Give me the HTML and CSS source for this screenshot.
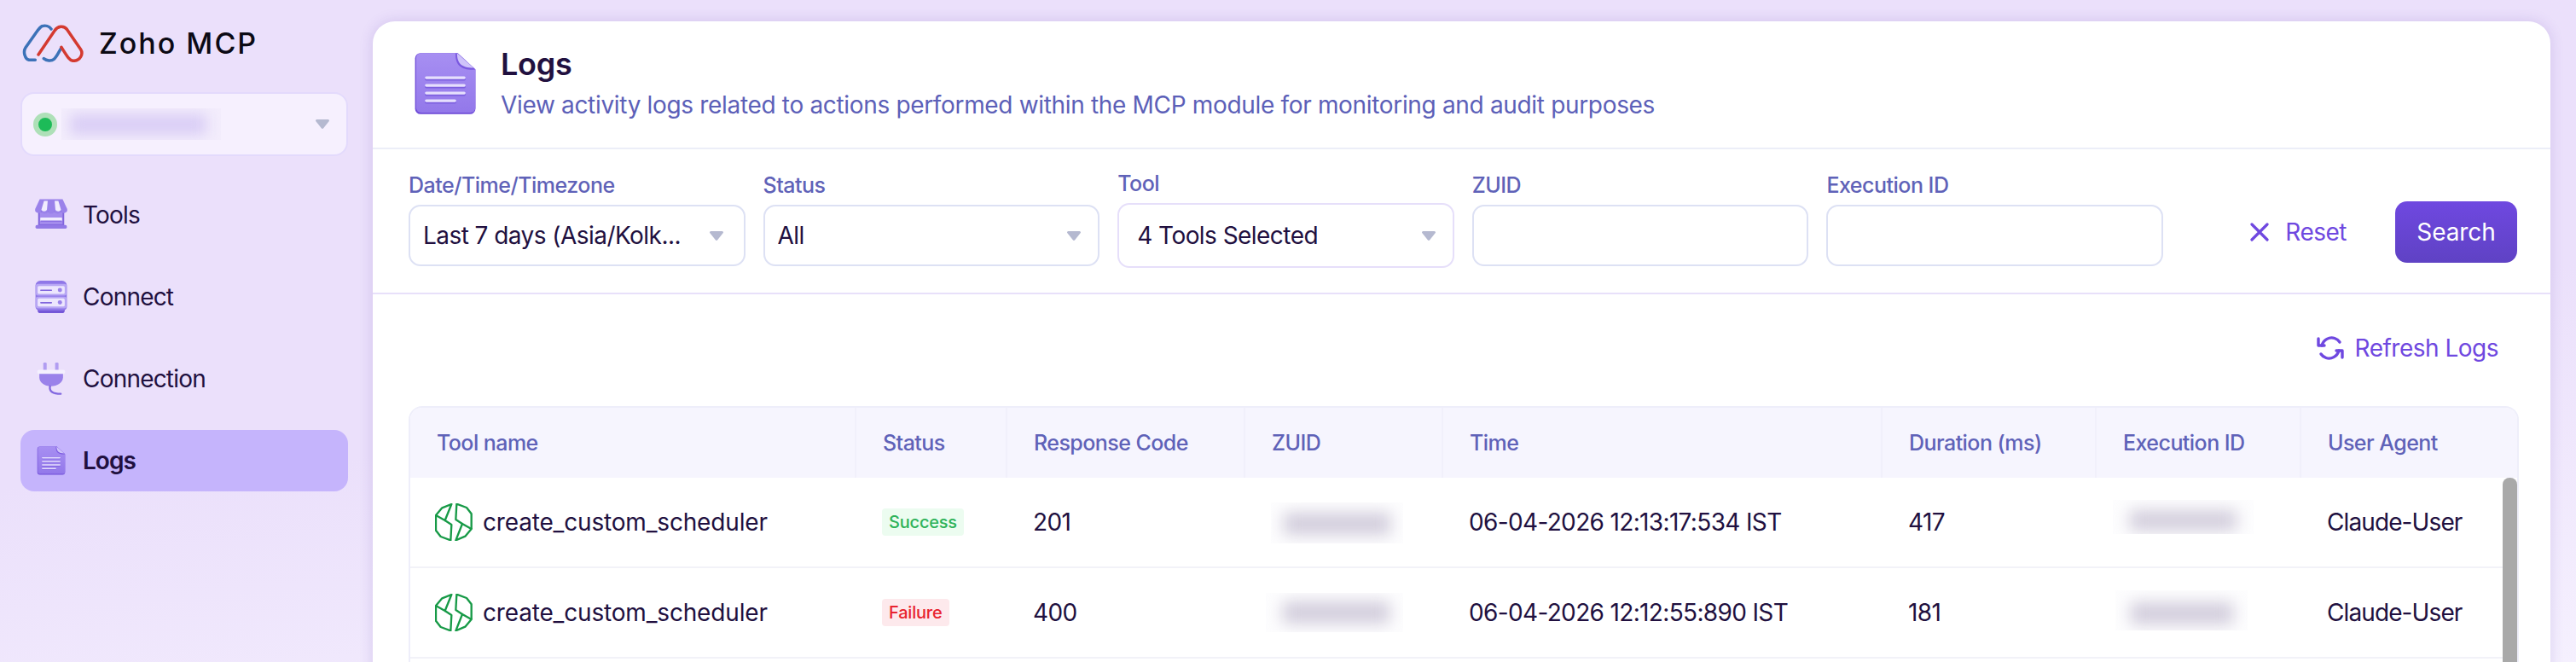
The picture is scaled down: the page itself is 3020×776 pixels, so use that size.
FILE: index.html
```html
<!DOCTYPE html>
<html lang="en">
<head>
<meta charset="utf-8">
<title>Zoho MCP - Logs</title>
<link rel="stylesheet" href="styles.css">
</head>
<body>
<svg class="defs" width="0" height="0" aria-hidden="true">
  <defs>
    <linearGradient id="gDoc" x1="0" y1="0" x2="0" y2="1"><stop offset="0" stop-color="#a78ff2"/><stop offset="1" stop-color="#9378ea"/></linearGradient>
    <symbol id="docIcon" viewBox="40 60 230 233">
      <path fill="#6f4cd8" d="M65 65H200L265 125V268a20 20 0 0 1-20 20H65a20 20 0 0 1-20-20V85a20 20 0 0 1 20-20z"/>
      <path fill="url(#gDoc)" d="M67 65H200L265 125V264a18 18 0 0 1-18 18H67a18 18 0 0 1-18-18V83a18 18 0 0 1 18-18z"/>
      <path fill="#7a58e0" d="M192 66c0 40 16 60 64 60l9-1-65-60z"/>
      <path fill="#cfc3fa" d="M198 65c0 36 14 53 60 54z"/>
      <g stroke-linecap="round" fill="none" stroke-width="11" stroke="#7d5fe0"><path d="M86 160H224M86 188H224M86 216H224M86 244H190"/></g>
      <g stroke-linecap="round" fill="none" stroke-width="10" stroke="#e6dffd"><path d="M86 155H224M86 183H224M86 211H224M86 239H190"/></g>
    </symbol>
    <symbol id="toolIcon" viewBox="0 0 122 122">
      <path fill="#8064dc" d="M12 45H110V106H12z"/>
      <path fill="#a48ced" d="M18 50H104V96H18z"/>
      <rect x="20" y="71" width="82" height="12" rx="2" fill="#f1ecfe"/>
      <path d="M22 84H100" stroke="#7d5fe0" stroke-width="3"/>
      <rect x="2" y="99" width="118" height="13" rx="5" fill="#9279e6"/>
      <path fill="#9a82ea" d="M18 2H104L121 38a12 12 0 0 1-24 6 12 12 0 0 1-24 0 12 12 0 0 1-24 0 12 12 0 0 1-24 0A12 12 0 0 1 1 38z"/>
      <path fill="#f1ecfe" d="M34 8H48L45 42a12 10 0 0 1-21 0zM74 8H88L98 42a12 10 0 0 1-21 0z"/>
    </symbol>
    <symbol id="serverIcon" viewBox="0 0 122 122">
      <path fill="#7558d8" d="M10 100H112V112a10 10 0 0 1-10 10H20a10 10 0 0 1-10-10z"/>
      <path fill="#8f77e8" d="M20 0H102A18 18 0 0 1 120 18V98a14 14 0 0 1-14 14H16A14 14 0 0 1 2 98V18A18 18 0 0 1 20 0z"/>
      <rect x="2" y="12" width="118" height="44" rx="10" fill="#b7a6f4"/>
      <rect x="2" y="60" width="118" height="44" rx="10" fill="#b7a6f4"/>
      <rect x="10" y="20" width="102" height="30" rx="5" fill="#ece6fd"/>
      <rect x="10" y="67" width="102" height="30" rx="5" fill="#ece6fd"/>
      <path d="M22 36H62M22 83H62" stroke="#8064dc" stroke-width="5" stroke-linecap="round"/>
      <circle cx="94" cy="35" r="8" fill="#9a82ea"/><circle cx="94" cy="82" r="8" fill="#9a82ea"/>
    </symbol>
    <symbol id="plugIcon" viewBox="0 0 100 115">
      <rect x="22" y="0" width="12" height="30" rx="4" fill="#b19df1"/>
      <rect x="64" y="0" width="12" height="30" rx="4" fill="#b19df1"/>
      <path fill="#9a82ea" d="M8 36H92V52C92 70 72 84 49 84S8 70 8 52z"/>
      <rect x="1" y="26" width="98" height="14" rx="5" fill="#f4f0fe"/>
      <path d="M46 84C42 102 56 111 84 111" fill="none" stroke="#8268e0" stroke-width="7" stroke-linecap="round"/>
    </symbol>
    <symbol id="toolMark" viewBox="30 30 132 132">
      <g fill="none" stroke="#179a47" stroke-width="7" stroke-linejoin="round">
        <path d="M88 33L55 46L33 72L65 90z"/>
        <path d="M33 72V125L50 147L85 160L88 105L65 90"/>
        <path d="M103 160L136 146L158 120L126 102z"/>
        <path d="M158 120V67L141 45L106 32L103 87L126 102"/>
      </g>
    </symbol>
    <symbol id="caret" viewBox="0 0 16 11">
      <path d="M1.500 0H14.500a1.400 1.400 0 0 1 1.100 2.300L9.200 10.200a1.600 1.600 0 0 1-2.400 0L.4 2.300A1.400 1.400 0 0 1 1.500 0z" fill="currentColor"/>
    </symbol>
  </defs>
</svg>

<div class="app">
  <aside class="sidebar">
    <div class="brand">
      <svg class="logo" viewBox="48 54 216 135" fill="none" stroke-width="10.500" stroke-linecap="round" stroke-linejoin="round">
        <path stroke="#3c72b8" d="M150 72C143 62 130 58 118 62C110 66 104 75 96 86L60 137C50 152 58 178 72 181L94 181"/>
        <path stroke="#3c72b8" d="M124 176C134 184 150 186 160 178C170 170 178 150 186 138"/>
        <path stroke="#d43a30" d="M105 162L162 78C172 62 194 58 206 74L254 144C264 160 252 184 228 184C216 184 208 172 186 136"/>
      </svg>
      <span class="brand-name">Zoho MCP</span>
    </div>

    <div class="org-select">
      <span class="status-dot"></span>
      <span class="org-blur"><span class="org-blob"></span></span>
      <svg class="caret org-caret"><use href="#caret"/></svg>
    </div>

    <nav class="nav">
      <a class="nav-item"><svg class="nav-icon"><use href="#toolIcon"/></svg><span>Tools</span></a>
      <a class="nav-item"><svg class="nav-icon"><use href="#serverIcon"/></svg><span>Connect</span></a>
      <a class="nav-item"><svg class="nav-icon plug"><use href="#plugIcon"/></svg><span>Connection</span></a>
      <a class="nav-item active"><svg class="nav-icon doc"><use href="#docIcon"/></svg><span>Logs</span></a>
    </nav>
  </aside>

  <main class="card">
    <header class="page-head">
      <svg class="page-icon"><use href="#docIcon"/></svg>
      <div class="page-text">
        <h1>Logs</h1>
        <p>View activity logs related to actions performed within the MCP module for monitoring and audit purposes</p>
      </div>
    </header>

    <section class="filters">
      <div class="field">
        <label>Date/Time/Timezone</label>
        <div class="control control-date"><span>Last 7 days (Asia/Kolk...</span><svg class="caret"><use href="#caret"/></svg></div>
      </div>
      <div class="field">
        <label>Status</label>
        <div class="control"><span>All</span><svg class="caret"><use href="#caret"/></svg></div>
      </div>
      <div class="field field-focus">
        <label>Tool</label>
        <div class="control"><span>4 Tools Selected</span><svg class="caret"><use href="#caret"/></svg></div>
      </div>
      <div class="field">
        <label>ZUID</label>
        <div class="control"></div>
      </div>
      <div class="field">
        <label>Execution ID</label>
        <div class="control"></div>
      </div>
      <div class="actions">
        <button class="reset" type="button">
          <svg class="reset-x" viewBox="0 0 22 22" fill="none" stroke="#6f48e0" stroke-width="3.200" stroke-linecap="round"><path d="M2 2L20 20M20 2L2 20"/></svg>
          Reset
        </button>
        <button class="search" type="button">Search</button>
      </div>
    </section>

    <section class="results">
      <div class="refresh-bar">
        <button class="refresh" type="button">
          <svg class="refresh-icon" viewBox="0 0 32 30" fill="none" stroke="#6f48e0" stroke-width="3.400" stroke-linecap="round" stroke-linejoin="round">
            <path d="M6 12C8 5 15 1.500 21 3.500C24 4.500 26 6.500 27 8"/>
            <path d="M26 18C24 25 17 28.500 11 26.500C8 25.500 6 23.500 5 22"/>
            <path d="M2 4V12H9"/>
            <path d="M30 26V18H23"/>
          </svg>
          Refresh Logs
        </button>
      </div>

      <div class="table">
        <div class="row head">
          <div>Tool name</div><div>Status</div><div>Response Code</div><div>ZUID</div><div>Time</div><div>Duration (ms)</div><div>Execution ID</div><div>User Agent</div>
        </div>
        <div class="row">
          <div class="tool"><svg class="tool-mark"><use href="#toolMark"/></svg>create_custom_scheduler</div>
          <div><span class="badge ok">Success</span></div>
          <div>201</div>
          <div><span class="redact zuid-a"><span class="blob"></span></span></div>
          <div>06-04-2026 12:13:17:534 IST</div>
          <div>417</div>
          <div><span class="redact exec-a"><span class="blob"></span></span></div>
          <div class="agent">Claude-User</div>
        </div>
        <div class="row">
          <div class="tool"><svg class="tool-mark"><use href="#toolMark"/></svg>create_custom_scheduler</div>
          <div><span class="badge bad">Failure</span></div>
          <div>400</div>
          <div><span class="redact zuid-b"><span class="blob"></span></span></div>
          <div>06-04-2026 12:12:55:890 IST</div>
          <div>181</div>
          <div><span class="redact exec-b"><span class="blob"></span></span></div>
          <div class="agent">Claude-User</div>
        </div>
        <div class="row"></div>
        <div class="scroll-thumb"></div>
      </div>
    </section>
  </main>
</div>
</body>
</html>
```

FILE: styles.css
```css
* { box-sizing: border-box; }
html, body { margin: 0; height: 776px; overflow: hidden; }
body {
  font-family: "Inter", "Liberation Sans", sans-serif;
  color: #21103f;
  background: linear-gradient(175deg, #ebe0fb 0%, #ebe0fb 55%, #f5f0fe 100%);
}
.defs { position: absolute; }
.app { display: flex; height: 776px; overflow: hidden; }

/* Sidebar */
.sidebar { width: 437px; flex: none; padding: 28px 29px 0 24px; }
.brand { display: flex; align-items: center; gap: 18px; height: 45px; margin-left: 2px; }
.logo { width: 72px; height: 45px; flex: none; }
.brand-name { font-size: 34px; font-weight: 500; letter-spacing: 2px; color: #0c0a14; }
.org-select {
  display: flex; align-items: center;
  height: 75px; margin-top: 35px; padding: 0 20px 0 13px;
  background: #f6f0fe; border: 2px solid #e3dafc; border-radius: 16px;
}
.status-dot {
  width: 28px; height: 28px; flex: none; border-radius: 50%;
  background: #1dbb58; border: 6px solid #aee0b8;
}
.org-blur { display: block; width: 187px; height: 37px; margin-left: 5px; overflow: hidden; background: #f3edfc; }
.org-blob { display: block; width: 160px; height: 24px; margin: 7px 0 0 10px; background: #d9cdf5; filter: blur(8px); }
.org-caret { margin-left: auto; }
.caret { width: 16px; height: 11px; flex: none; color: #b5b9d0; }

.nav { display: flex; flex-direction: column; gap: 24px; margin-top: 33px; }
.nav-item {
  display: flex; align-items: center; gap: 18px;
  height: 72px; padding-left: 17px;
  font-size: 28px; letter-spacing: -.8px; color: #21103f; border-radius: 16px;
}
.nav-icon { width: 38px; height: 38px; flex: none; }
.nav-icon.plug { width: 34px; margin: 0 2px; }
.nav-icon.doc { width: 34px; margin: 0 2px; }
.nav-item.active { background: #c5b4fc; font-weight: 600; letter-spacing: -1px; }

/* Card */
.card {
  flex: 1; min-width: 0;
  margin: 25px 30px 0 0;
  height: 900px;
  background: #fff; border-radius: 26px 26px 0 0;
  box-shadow: 0 0 16px rgba(96, 60, 170, .18);
}
.page-head {
  display: flex; align-items: flex-start; gap: 28px;
  height: 150px; padding: 35px 0 0 48px;
  border-bottom: 2px solid #eceef8;
}
.page-icon { width: 74px; height: 76px; flex: none; }
.page-text { margin-top: -5px; }
.page-text h1 { margin: 0; font-size: 36px; line-height: 40px; font-weight: 600; letter-spacing: -.3px; color: #21103f; }
.page-text p { margin: 10px 0 0; font-size: 28px; line-height: 36px; letter-spacing: -.33px; color: #5c60b8; }

.filters {
  display: flex; align-items: flex-start; gap: 21px;
  height: 170px; padding: 30px 0 0 42px;
  border-bottom: 2px solid #e8e0fa;
}
.field { width: 394.600px; flex: none; }
.field label { display: block; height: 35px; margin-top: -2px; padding-bottom: 2px; font-size: 25px; line-height: 28px; font-weight: 500; letter-spacing: -.5px; color: #5f62b8; }
.control {
  display: flex; align-items: center; justify-content: space-between;
  height: 72px; margin-top: 2px; padding: 0 20px 0 15px;
  border: 2px solid #dde1f4; border-radius: 14px;
  font-size: 28px; letter-spacing: -.55px; color: #21103f;
}
.control-date { padding-right: 24px; }
.field-focus label { margin-top: -4px; }
.field-focus .control { height: 76px; border-color: #e6dffa; padding-left: 21px; }
.actions { display: flex; align-items: center; margin-left: auto; margin-right: 39px; padding-top: 31px; }
.reset, .refresh {
  display: flex; align-items: center;
  padding: 0; border: 0; background: none;
  font: inherit; font-size: 28px; letter-spacing: -.5px; color: #6f48e0;
}
.reset { gap: 19px; margin-right: 57px; }
.reset-x { width: 22px; height: 22px; }
.search {
  width: 143px; height: 72px; padding: 0;
  border: 0; border-radius: 14px;
  background: linear-gradient(#6f48e0, #5f42c4);
  font: inherit; font-size: 28px; letter-spacing: -.1px; color: #fff;
}

/* Results */
.results { padding: 0 37px 0 42px; }
.refresh-bar { display: flex; justify-content: flex-end; height: 131px; padding: 47px 24px 0 0; }
.refresh { gap: 13px; height: 32px; }
.refresh-icon { width: 32px; height: 30px; }

.table {
  position: relative; overflow: hidden;
  border: 2px solid #eeeefa; border-bottom: 0; border-radius: 16px 16px 0 0;
}
.row {
  display: grid;
  grid-template-columns: 523px 177px 279px 232px 515px 251px 240px 253px;
  height: 106px;
  border-bottom: 2px solid #f2f2f8;
  font-size: 28px; letter-spacing: -.65px; color: #21103f;
}
.row > div { display: flex; align-items: center; padding-left: 30px; min-width: 0; white-space: nowrap; }
.row.head {
  height: 82px; border-bottom: 0;
  background: #f6f5fe; font-size: 25px; font-weight: 500; letter-spacing: -.55px; color: #5f62b8;
}
.row.head > div { padding-left: 31px; border-right: 2px solid #f1f0fb; }
.row.head > div:last-child { border-right: 0; }
.row .tool { padding-left: 29px; gap: 12px; letter-spacing: -.17px; }
.row .agent { letter-spacing: -.9px; }
.tool-mark { width: 44px; height: 44px; flex: none; }
.badge {
  display: inline-block; height: 32px; padding: 0 8px;
  border-radius: 4px; font-size: 20px; line-height: 32px; font-weight: 500; letter-spacing: -.2px;
}
.badge.ok { background: #ecfcf0; color: #2fb35a; }
.badge.bad { background: #fde9ec; color: #e8232f; }
.redact { display: block; overflow: hidden; background: #fdfdfe; }
.blob { display: block; background: #d2cddc; filter: blur(9px); }
.zuid-a { width: 155px; height: 48px; margin-top: 2px; }
.zuid-b { width: 161px; height: 46px; margin: 0 0 0 -6px; }
.zuid-a .blob { width: 125px; height: 26px; margin: 12px 0 0 15px; }
.zuid-b .blob { width: 125px; height: 26px; margin: 10px 0 0 20px; }
.exec-a { width: 165px; height: 40px; margin: -12px 0 0 -11px; }
.exec-b { width: 155px; height: 47px; margin: -5px 0 0 -8px; }
.exec-a .blob { width: 125px; height: 24px; margin: 12px 0 0 20px; }
.exec-b .blob { width: 120px; height: 26px; margin: 14px 0 0 18px; }
.scroll-thumb {
  position: absolute; top: 82px; right: 0;
  width: 17px; height: 300px;
  background: #a9a9a9; border-radius: 8px 8px 0 0;
}
```
